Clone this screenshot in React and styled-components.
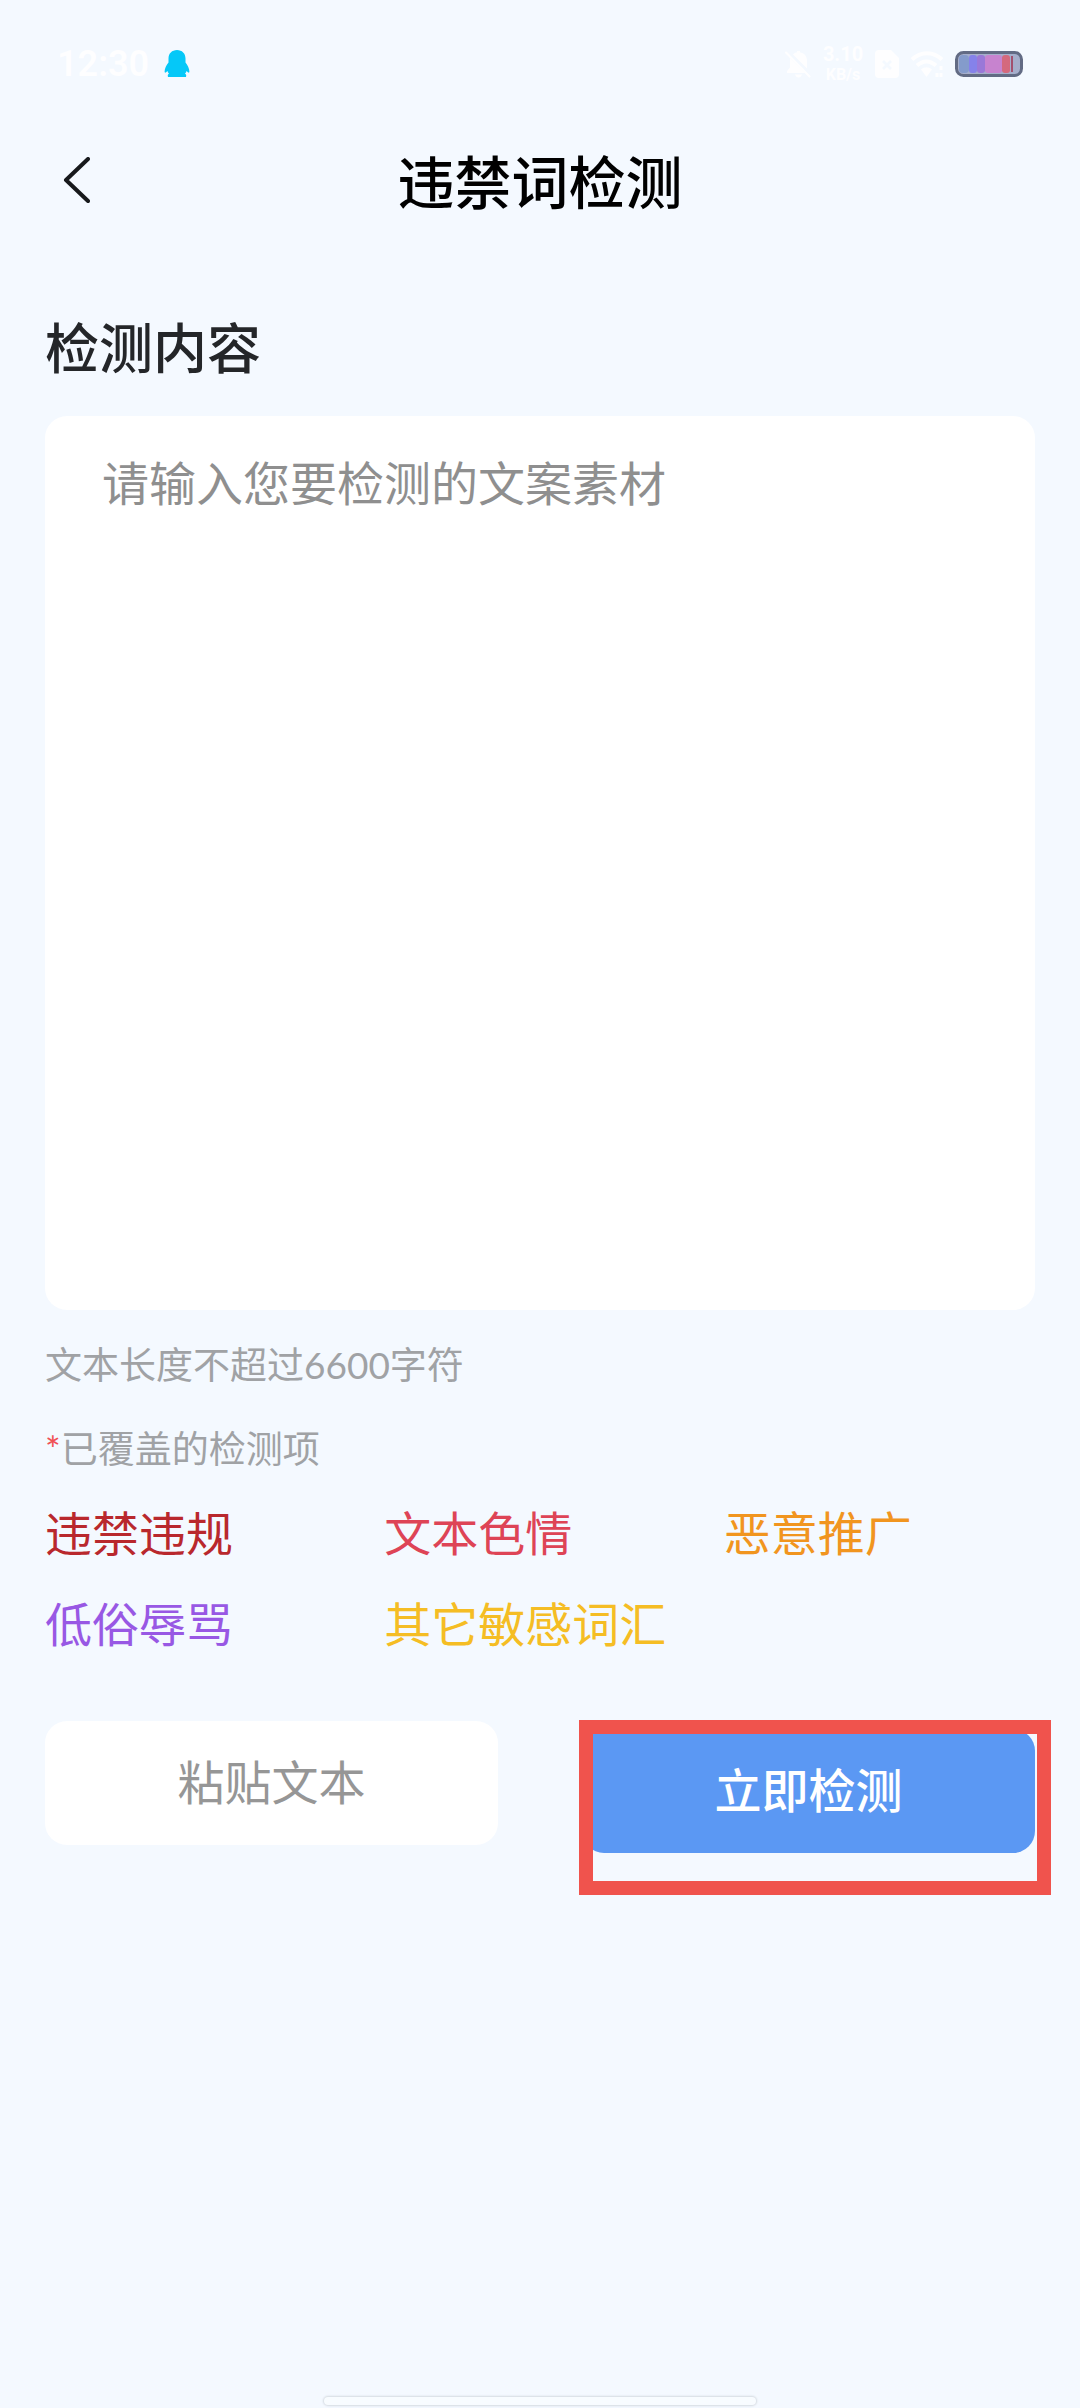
import React, { useState } from "react";
import styled, { createGlobalStyle } from "styled-components";

const GlobalStyle = createGlobalStyle`
  *, *::before, *::after { box-sizing: border-box; }
  body {
    margin: 0;
    background: #f4f9ff;
    font-family: Inter, "Noto Sans CJK SC", sans-serif;
  }
  h1, h2, p, ul { margin: 0; padding: 0; }
  button, textarea { font-family: inherit; border: 0; }
`;

const Page = styled.div`
  display: flex;
  flex-direction: column;
  min-height: 100vh;
`;

const StatusBar = styled.div`
  display: flex;
  align-items: center;
  justify-content: space-between;
  height: 128px;
  padding: 0 57px;
  color: #fefeff;
`;

const StatusGroup = styled.div`
  display: flex;
  align-items: center;
  gap: ${(p) => p.$gap}px;
`;

const Clock = styled.time`
  font: 600 36px/44px Roboto, sans-serif;
`;

const NetworkSpeed = styled.div`
  display: flex;
  flex-direction: column;
  align-items: center;
  width: 42px;
  font-family: Roboto, sans-serif;
  font-weight: 700;
  font-size: 20px;
  line-height: 22px;
`;

const SpeedUnit = styled.span`
  font-size: 16px;
  line-height: 20px;
`;

const Header = styled.header`
  display: grid;
  grid-template-columns: 72px 1fr 72px;
  align-items: start;
  height: 110px;
  padding: 18px 40px 0;
`;

const BackButton = styled.button`
  display: flex;
  align-items: center;
  justify-content: center;
  height: 68px;
  padding: 0;
  background: none;
  color: #17191c;
`;

const Title = styled.h1`
  font-size: 57px;
  font-weight: 500;
  line-height: 76px;
  text-align: center;
  color: #000;
`;

const Main = styled.main`
  display: flex;
  flex-direction: column;
  padding: 76px 45px 0;
`;

const SectionTitle = styled.h2`
  margin-bottom: 30px;
  font-size: 54px;
  font-weight: 500;
  line-height: 72px;
  color: #242629;
`;

const Editor = styled.textarea`
  display: block;
  width: 100%;
  padding: 38px 57px 16px;
  border-radius: 22px;
  background: #fff;
  color: #242629;
  font-size: 47px;
  line-height: 60px;
  resize: none;
  outline: none;
  &::placeholder { color: #8f8f8f; opacity: 1; }
`;

const Notes = styled.div`
  display: flex;
  flex-direction: column;
  gap: 32px;
  margin: 29px 0;
`;

const Note = styled.p`
  font-family: Lato, "Noto Sans CJK SC", sans-serif;
  font-size: 37px;
  line-height: 52px;
  color: #a0a2a5;
`;

const Star = styled.span`
  color: #f05055;
`;

const Categories = styled.ul`
  display: grid;
  grid-template-columns: repeat(3, 1fr);
  gap: 31px 28px;
  list-style: none;
`;

const Category = styled.li`
  font-size: 47px;
  line-height: 60px;
  white-space: nowrap;
  color: ${(p) => p.$color};
`;

const Actions = styled.div`
  display: grid;
  grid-template-columns: 1fr 1fr;
  gap: 84px;
  margin-top: 66px;
`;

const Button = styled.button`
  width: 100%;
  height: 124px;
  padding: 0;
  border-radius: 22px;
  font-size: 47px;
  line-height: 60px;
  font-weight: ${(p) => (p.$primary ? 500 : 400)};
  background: ${(p) => (p.$primary ? "#5b98f3" : "#fff")};
  color: ${(p) => (p.$primary ? "#fff" : "#969696")};
`;

const Highlighted = styled.div`
  position: relative;
  padding-top: 8px;
  &::after {
    content: "";
    position: absolute;
    inset: -1px -16px -42px -3px;
    border: 14px solid #f0534d;
    pointer-events: none;
  }
`;

const HomeIndicator = styled.div`
  width: 40%;
  height: 8px;
  margin: auto auto 3px;
  border-radius: 4px;
  background: #f8fcff;
  box-shadow: 0 0 2px 1px #d5dbe1;
`;

const CATEGORIES = [
  { label: "违禁违规", color: "#b9282d" },
  { label: "文本色情", color: "#de4456" },
  { label: "恶意推广", color: "#f1951f" },
  { label: "低俗辱骂", color: "#9858e4" },
  { label: "其它敏感词汇", color: "#f5bd24" },
];

const PenguinIcon = () => (
  <svg width="26" height="28" viewBox="0 0 26 28" fill="#05c8f8" aria-hidden="true">
    <path d="M13 0C8 0 4.500 3.500 4.500 8.500v4C2.500 15 .6 18.500.6 21.500c0 1.500.8 1.800 2.800-.5.4 1 .9 2 1.600 2.800-1.300.6-1.500 1.500-1 3.200h18c.5-1.700.3-2.600-1-3.200.7-.8 1.200-1.800 1.600-2.800 2 2.300 2.800 2 2.800.5 0-3-1.900-6.500-3.900-9v-4C21.500 3.500 18 0 13 0z" />
  </svg>
);

const BellOffIcon = () => (
  <svg width="26" height="28" viewBox="0 0 26 28" fill="currentColor" aria-hidden="true">
    <path d="M8 4.500C9 3.300 10.500 2.500 12 2.200V1h3v1.200c4 .7 7 4 7 8.300v8L8 4.500zM5 8l15 15H2v-2l3-3.500V8zM10 24.500h7c-.5 1.800-1.800 3-3.500 3s-3-1.200-3.500-3z" />
    <path d="M1 2.500l23.500 24" stroke="currentColor" strokeWidth="2" strokeLinecap="round" />
  </svg>
);

const SimIcon = () => (
  <svg width="24" height="28" viewBox="0 0 24 28" aria-hidden="true">
    <path d="M4 0h12l8 8v16a4 4 0 0 1-4 4H4a4 4 0 0 1-4-4V4a4 4 0 0 1 4-4z" fill="currentColor" />
    <path d="M8 11l8 8M16 11l-8 8" stroke="#f4f9ff" strokeWidth="3" />
  </svg>
);

const WifiIcon = () => (
  <svg width="34" height="28" viewBox="0 0 34 28" fill="none" stroke="currentColor" strokeWidth="4" aria-hidden="true">
    <path d="M2 9.500C10.500 1 23.500 1 32 9.500M7 15.500c5.800-5.500 13.200-5.500 19 0" />
    <path d="M11 19.500c3.400-3 7.600-3 11 0L16.500 27z" fill="currentColor" stroke="none" />
    <path d="M27 23v4M31 16v4M31 23v4" strokeWidth="3" />
  </svg>
);

const BatteryIcon = () => (
  <svg width="68" height="26" viewBox="0 0 68 26" aria-hidden="true">
    <rect x="1.500" y="1.500" width="65" height="23" rx="7" fill="#a5aecb" stroke="#626b84" strokeWidth="3" />
    <rect x="4" y="4" width="10" height="18" rx="4" fill="#849bcb" />
    <rect x="14" y="4" width="8" height="18" rx="3" fill="#8582ea" />
    <rect x="22" y="4" width="8" height="18" rx="3" fill="#9a78d8" />
    <rect x="30" y="4" width="17" height="18" rx="3" fill="#c783cf" />
    <rect x="47" y="4" width="8" height="18" rx="3" fill="#d4697d" />
    <rect x="56" y="5" width="2" height="16" fill="#a2506e" />
  </svg>
);

const BackIcon = () => (
  <svg width="28" height="46" viewBox="0 0 28 46" fill="none" stroke="currentColor" strokeWidth="4" strokeLinecap="round" strokeLinejoin="round" aria-hidden="true">
    <path d="M26 2L4 23l22 21" />
  </svg>
);

export default function App() {
  const [text, setText] = useState("");

  return (
    <>
      <GlobalStyle />
      <Page>
        <StatusBar>
          <StatusGroup $gap={15}>
            <Clock>12:30</Clock>
            <PenguinIcon />
          </StatusGroup>
          <StatusGroup $gap={11}>
            <BellOffIcon />
            <NetworkSpeed>
              <span>3.10</span>
              <SpeedUnit>KB/s</SpeedUnit>
            </NetworkSpeed>
            <SimIcon />
            <WifiIcon />
            <BatteryIcon />
          </StatusGroup>
        </StatusBar>
        <Header>
          <BackButton type="button" aria-label="返回">
            <BackIcon />
          </BackButton>
          <Title>违禁词检测</Title>
        </Header>
        <Main>
          <SectionTitle>
            <label htmlFor="content">检测内容</label>
          </SectionTitle>
          <Editor
            id="content"
            rows={14}
            maxLength={6600}
            placeholder="请输入您要检测的文案素材"
            value={text}
            onChange={(e) => setText(e.target.value)}
          />
          <Notes>
            <Note>文本长度不超过6600字符</Note>
            <Note>
              <Star>*</Star>已覆盖的检测项
            </Note>
          </Notes>
          <Categories>
            {CATEGORIES.map((c) => (
              <Category key={c.label} $color={c.color}>
                {c.label}
              </Category>
            ))}
          </Categories>
          <Actions>
            <Button type="button">粘贴文本</Button>
            <Highlighted>
              <Button type="button" $primary>
                立即检测
              </Button>
            </Highlighted>
          </Actions>
        </Main>
        <HomeIndicator />
      </Page>
    </>
  );
}
